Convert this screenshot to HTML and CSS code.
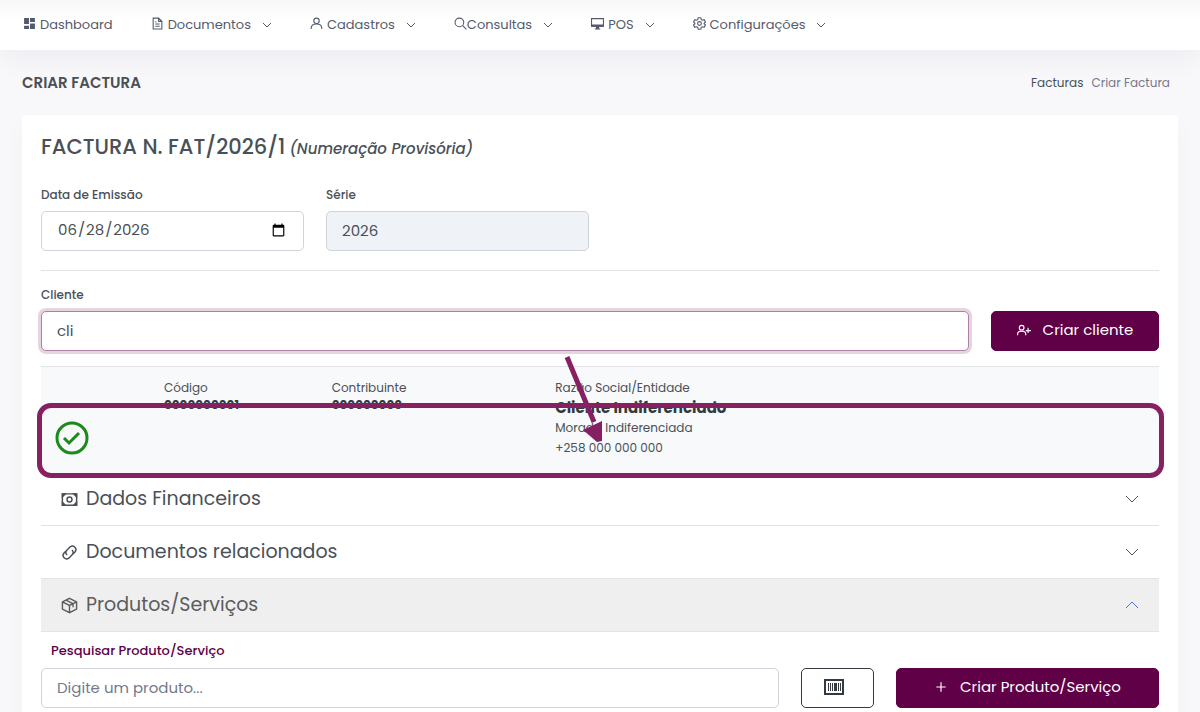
FILE: index.html
```html
<!DOCTYPE html>
<html lang="pt">
<head>
    <meta charset="UTF-8">
    <meta name="viewport" content="width=device-width, initial-scale=1.0">
    <title>Criar Factura</title>
    <link rel="stylesheet" href="styles.css">
</head>
<body>
    <nav class="topnav">
        <a class="nav-link" href="#">
            <svg class="icon solid" viewBox="0 0 24 24"><path d="M2 2h9v11H2zM13 2h9v7h-9zM2 16h9v6H2zM13 12h9v10h-9z"/></svg>
            <span>Dashboard</span>
        </a>
        <a class="nav-link" href="#">
            <svg class="icon" viewBox="0 0 24 24"><path d="M4 2h10l6 6v14H4zM14 2v6h6M8 9h2M8 13h8M8 17h8"/></svg>
            <span>Documentos</span>
            <svg class="arrow" viewBox="0 0 10 10"><path d="M1 3l4 4 4-4"/></svg>
        </a>
        <a class="nav-link" href="#">
            <svg class="icon" viewBox="0 0 24 24"><circle cx="12" cy="7" r="5"/><path d="M2 22c0-6 4-9 10-9s10 3 10 9"/></svg>
            <span>Cadastros</span>
            <svg class="arrow" viewBox="0 0 10 10"><path d="M1 3l4 4 4-4"/></svg>
        </a>
        <a class="nav-link tight" href="#">
            <svg class="icon" viewBox="0 0 24 24"><circle cx="10" cy="10" r="8"/><path d="M16 16l7 7"/></svg>
            <span>Consultas</span>
            <svg class="arrow" viewBox="0 0 10 10"><path d="M1 3l4 4 4-4"/></svg>
        </a>
        <a class="nav-link" href="#">
            <svg class="icon" viewBox="0 0 24 24"><path d="M1 3h22v14H1zM7 22h10"/><path fill="currentColor" d="M1 15h22v2H1zM10 17h4v4h-4z"/></svg>
            <span>POS</span>
            <svg class="arrow" viewBox="0 0 10 10"><path d="M1 3l4 4 4-4"/></svg>
        </a>
        <a class="nav-link" href="#">
            <svg class="icon" viewBox="0 0 24 24"><circle cx="12" cy="12" r="3.500"/><path d="M9.500 1.500h5l.8 3.300 2 1.200 3.300-1 2.400 4.200-2.500 2.300v1l2.500 2.300-2.400 4.200-3.300-1-2 1.200-.8 3.300h-5l-.8-3.300-2-1.200-3.300 1L1 14.800l2.500-2.300v-1L1 9.200 3.400 5l3.300 1 2-1.200z"/></svg>
            <span>Configurações</span>
            <svg class="arrow" viewBox="0 0 10 10"><path d="M1 3l4 4 4-4"/></svg>
        </a>
    </nav>

    <main class="page">
        <div class="page-title">
            <h1>Criar Factura</h1>
            <div class="breadcrumb">
                <a href="#">Facturas</a>
                <span>Criar Factura</span>
            </div>
        </div>

        <div class="card">
            <h2 class="invoice-title">FACTURA N. FAT/2026/1<em>(Numeração Provisória)</em></h2>

            <div class="row">
                <div class="col-3">
                    <label for="issueDate">Data de Emissão</label>
                    <input type="date" id="issueDate" class="form-control" value="2026-06-28">
                </div>
                <div class="col-3">
                    <label for="serie">Série</label>
                    <input type="text" id="serie" class="form-control" value="2026" readonly>
                </div>
            </div>

            <hr>

            <div class="row">
                <div class="col-10">
                    <label for="client">Cliente</label>
                    <input type="text" id="client" class="form-control active" value="cli">
                </div>
                <button type="button" class="btn col-2">
                    <svg class="btn-icon" viewBox="0 0 24 24"><circle cx="8" cy="8" r="4"/><path d="M1 21v-2c0-3 3-5 7-5s7 2 7 5v2M19 8v9M15 13h9"/></svg>
                    Criar cliente
                </button>
            </div>

            <div class="client-result">
                <div class="check">
                    <svg viewBox="0 0 34 34"><circle cx="17" cy="17" r="15"/><path d="M9 17l5 5 10-10"/></svg>
                </div>
                <div class="client-cell">
                    <span>Código</span>
                    <b>0000000001</b>
                </div>
                <div class="client-cell">
                    <span>Contribuinte</span>
                    <b>000000000</b>
                </div>
                <div class="client-cell">
                    <span>Razão Social/Entidade</span>
                    <strong>Cliente Indiferenciado</strong>
                    <span>Morada Indiferenciada</span>
                    <span>+258 000 000 000</span>
                </div>
                <div class="highlight"></div>
                <svg class="pointer" viewBox="0 0 50 90"><path class="shaft" d="M9 2l27 65"/><path class="head" d="M25 75l19-9v20l-5 1z"/></svg>
            </div>

            <div class="accordion">
                <button type="button" class="accordion-button">
                    <svg class="acc-icon" viewBox="0 0 24 24"><path d="M2 4h20v16H2z"/><circle cx="12" cy="12" r="3.500"/><path fill="currentColor" d="M2 4h4L2 8zM22 4h-4l4 4zM2 20h4l-4-4zM22 20h-4l4-4z"/></svg>
                    <span>Dados Financeiros</span>
                    <svg class="caret" viewBox="0 0 14 14"><path d="M1 4l6 6 6-6"/></svg>
                </button>
                <button type="button" class="accordion-button">
                    <svg class="acc-icon" viewBox="0 0 24 24"><path d="M8.500 15.500a5 5 0 0 1 0-7l4.500-4.500a5 5 0 0 1 7 7l-3 3M15.500 8.500a5 5 0 0 1 0 7L11 20a5 5 0 0 1-7-7l3-3"/></svg>
                    <span>Documentos relacionados</span>
                    <svg class="caret" viewBox="0 0 14 14"><path d="M1 4l6 6 6-6"/></svg>
                </button>
                <button type="button" class="accordion-button open">
                    <svg class="acc-icon" viewBox="0 0 24 24"><path d="M12 2l10 5v10l-10 5-10-5V7zM2 7l10 5 10-5M12 12v10M7 4.500l10 5v5"/></svg>
                    <span>Produtos/Serviços</span>
                    <svg class="caret" viewBox="0 0 14 14"><path d="M1 10l6-6 6 6"/></svg>
                </button>
            </div>

            <label class="product-label" for="product">Pesquisar Produto/Serviço</label>
            <div class="row">
                <input type="text" id="product" class="form-control col-8" placeholder="Digite um produto...">
                <button type="button" class="btn btn-outline col-1" aria-label="Código de barras">
                    <svg viewBox="0 0 20 16"><path d="M1 1h18v14H1z"/><path class="bars" d="M4 4h1v8H4zM6 4h1v8H6zM8 4h1v8H8zM10 4h3v8h-3zM14 4h1v8h-1zM16 4h1v8h-1z"/></svg>
                </button>
                <button type="button" class="btn col-3">
                    <svg class="btn-icon" viewBox="0 0 24 24"><path d="M12 4v16M4 12h16"/></svg>
                    Criar Produto/Serviço
                </button>
            </div>
        </div>
    </main>
</body>
</html>
```
FILE: styles.css
```css
*{box-sizing:border-box;margin:0;padding:0}
body{font-family:Poppins,Inter,"Open Sans",sans-serif;font-size:13px;line-height:20px;color:#495057;background:#f8f8fb;min-height:100vh;overflow-x:hidden}
svg{fill:none;stroke:currentColor;stroke-width:2;flex-shrink:0}
a{text-decoration:none;color:inherit}
button,input{font:inherit}

/* top navigation */
.topnav{display:flex;gap:38px;height:50px;padding:0 23px;align-items:center;background:linear-gradient(#f8f8f8,#fff 20px);box-shadow:0 12px 24px rgba(18,38,63,0.04);color:#545a6d}
.nav-link{display:flex;align-items:center;gap:4px}
.nav-link.tight{gap:0}
.icon{width:13px;height:13px;margin-bottom:4px}
.solid{fill:currentColor;stroke:none}
.arrow{width:10px;height:10px;margin-left:7px;stroke-width:1}
.tight .arrow{margin-left:11px}

.page{padding:0 22px}
.page-title{display:flex;justify-content:space-between;align-items:center;height:65px;padding-right:8px}
.page-title h1{font-size:15px;font-weight:600;text-transform:uppercase}
.breadcrumb{display:flex;gap:8px;font-size:12px}
.breadcrumb span{color:#74788d}

.card{background:#fff;border-radius:4px;padding:16px 19px 24px;box-shadow:0 12px 24px rgba(18,38,63,0.03)}
.invoice-title{font-size:21px;line-height:32px;font-weight:500;margin-bottom:21px}
.invoice-title em{font-size:15px;margin-left:4px}

/* 12 column form grid */
.row{display:grid;grid-template-columns:repeat(12,1fr);column-gap:22px;align-items:end}
.col-1{grid-column:span 1}
.col-2{grid-column:span 2}
.col-3{grid-column:span 3}
.col-8{grid-column:span 8}
.col-10{grid-column:span 10}
label{display:block;font-size:12px;line-height:18px;font-weight:500;margin-bottom:7px}
.form-control{width:100%;height:40px;padding:0 15px 2px;border:1px solid #ced4da;border-radius:5px;background:#fff;color:#495057;font-size:15px;outline:none}
.form-control[readonly]{background:#eff2f7}
.form-control::placeholder{color:#74788d}
.form-control.active{border-color:#b080a4;box-shadow:0 0 0 3px #e6d4e1}
hr{border:0;border-top:1px solid #e2e3e5;margin:19px 0 15px}

.btn{display:flex;align-items:center;justify-content:center;gap:12px;height:40px;padding-bottom:2px;border:1px solid #600047;border-radius:5px;background:#600047;color:#fff;font-size:15px;white-space:nowrap;cursor:pointer}
.btn-icon{width:14px;height:14px}
.btn-outline{background:#fff;border-color:#343a40;color:#343a40;padding-right:8px}
.btn-outline svg{width:20px;height:16px}
.bars{fill:currentColor;stroke:none}

/* client search result */
.client-result{position:relative;display:grid;grid-template-columns:11fr 15fr 20fr 54fr;margin-top:15px;height:107px;padding-top:11px;border-top:1px solid #e2e3e5;background:#f8f9fb}
.client-cell{display:flex;flex-direction:column;font-size:12px;line-height:20px}
.client-cell b{font-size:12px;line-height:14px;color:#343a40}
.client-cell strong{font-size:15px;color:#343a40}
.check{padding:43px 0 0 14px;color:#1b8a1b}
.check svg{width:34px;height:34px;stroke-width:3}
.highlight{position:absolute;top:36px;left:-4px;right:-5px;height:75px;border:5px solid #862063;border-radius:14px;z-index:1}
.pointer{position:absolute;top:-12px;left:517px;width:50px;height:90px;color:#862063;z-index:1}
.shaft{stroke-width:5}
.head{fill:currentColor;stroke:none}

.accordion-button{display:flex;align-items:center;gap:8px;width:100%;height:53px;padding:0 20px;border:0;border-bottom:1px solid #e2e3e5;background:#fff;color:#495057;font-size:19px;text-align:left;cursor:pointer}
.accordion-button.open{background:#efefef;color:#5c5c5c}
.acc-icon{width:17px;height:17px}
.caret{width:14px;height:14px;margin-left:auto;stroke-width:1}
.open .caret{color:#556ee6}

.product-label{font-size:13px;color:#600047;margin:10px 0 8px 10px}
```
